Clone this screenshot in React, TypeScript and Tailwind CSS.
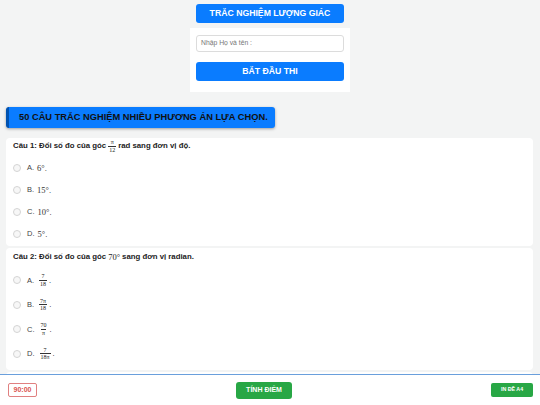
import React from "react";

const sans = { fontFamily: '"Liberation Sans", Arial, sans-serif' };

function Frac({ n, d }: { n: React.ReactNode; d: React.ReactNode }) {
  return (
    <span className="inline-flex flex-col items-center align-middle mx-[2px] text-[6px] leading-[6.5px] [font-family:'Liberation_Serif',serif] font-normal text-[#222]">
      <span className="px-[1px]">{n}</span>
      <span className="px-[1px] border-t-[0.5px] border-[#333]">{d}</span>
    </span>
  );
}

function Option({ label, children, h }: { label: string; children: React.ReactNode; h: string }) {
  return (
    <div className={`flex items-center ${h}`}>
      <span className="w-[8px] h-[8px] rounded-full border border-[#d4d4d4] bg-[#f7f7f7] ml-[7px]" />
      <span className="ml-[6px] text-[7.5px] text-[#444]">{label}</span>
      <span className="ml-[3px] text-[8.5px] text-[#333] [font-family:'Liberation_Serif',serif] flex items-center">
        {children}
      </span>
    </div>
  );
}

export default function App() {
  return (
    <div className="w-[540px] h-[405px] flex flex-col bg-[#f3f4f4] overflow-hidden" style={sans}>
      <div className="flex-1 overflow-hidden">
        <div className="flex flex-col items-center pt-[4px]">
          <div className="w-[148px] h-[19px] rounded-[3px] bg-[#0a7cff] text-white text-[8.7px] font-bold flex items-center justify-center">
            TRẮC NGHIỆM LƯỢNG GIÁC
          </div>
          <div className="mt-[5px] w-[160px] h-[64px] bg-white flex flex-col items-center pt-[7px]">
            <div className="w-[148px] h-[17px] rounded-[3px] border border-[#dcdcdc] bg-white flex items-center px-[4px] text-[6.8px] text-[#777]">
              Nhập Họ và tên :
            </div>
            <div className="mt-[10px] w-[148px] h-[19px] rounded-[3px] bg-[#0a7cff] text-white text-[8.7px] font-bold flex items-center justify-center">
              BẮT ĐẦU THI
            </div>
          </div>
        </div>

        <div className="mt-[15px] ml-[6px] w-[269px] h-[21px] rounded-[3px] bg-[#0a7cff] border-l-[3px] border-[#0052b0] shadow-[0_1px_3px_rgba(0,0,0,0.35)] flex items-center pl-[10px] text-[9.3px] font-bold text-[#111]">
          50 CÂU TRẮC NGHIỆM NHIỀU PHƯƠNG ÁN LỰA CHỌN.
        </div>

        <div className="mt-[10px] mx-[6px] w-[527px] flex flex-col gap-[2px]">
          <div className="bg-white rounded-[4px] h-[108px] pt-[1px] px-[7px]">
            <div className="h-[14px] flex items-center text-[7.8px] font-bold text-[#222]">
              Câu 1: Đổi số đo của góc
              <Frac n="π" d="12" />
              rad sang đơn vị độ.
            </div>
            <div className="mt-[4px] -ml-[7px]">
              <Option label="A." h="h-[22px]">6°.</Option>
              <Option label="B." h="h-[22px]">15°.</Option>
              <Option label="C." h="h-[22px]">10°.</Option>
              <Option label="D." h="h-[22px]">5°.</Option>
            </div>
          </div>
          <div className="bg-white rounded-[4px] h-[122px] pt-[2px] px-[7px]">
            <div className="h-[14px] flex items-center text-[7.8px] font-bold text-[#222]">
              Câu 2: Đổi số đo của góc
              <span className="mx-[2px] font-normal text-[8.5px] [font-family:'Liberation_Serif',serif]">70°</span>
              sang đơn vị radian.
            </div>
            <div className="mt-[4px] -ml-[7px]">
              <Option label="A." h="h-[24.5px]"><Frac n="7" d="18" />.</Option>
              <Option label="B." h="h-[24.5px]"><Frac n="7π" d="18" />.</Option>
              <Option label="C." h="h-[24.5px]"><Frac n="70" d="π" />.</Option>
              <Option label="D." h="h-[24.5px]"><Frac n="7" d="18π" />.</Option>
            </div>
          </div>
          <div className="bg-white rounded-[4px] h-[100px]" />
        </div>
      </div>

      <div className="h-[31px] shrink-0 bg-white border-t border-[#6a9fdc] flex items-center justify-between pl-[8px] pr-[7px]">
        <div className="w-[29px] h-[14px] rounded-[2px] border border-[#e08080] text-[#d9534f] text-[7px] font-bold flex items-center justify-center">
          90:00
        </div>
        <div className="w-[56px] h-[17px] rounded-[3px] bg-[#28a745] text-white text-[7px] font-bold flex items-center justify-center">
          TÍNH ĐIỂM
        </div>
        <div className="w-[42px] h-[14px] rounded-[2px] bg-[#28a745] text-white text-[5.3px] font-bold flex items-center justify-center">
          IN ĐỀ A4
        </div>
      </div>
    </div>
  );
}
